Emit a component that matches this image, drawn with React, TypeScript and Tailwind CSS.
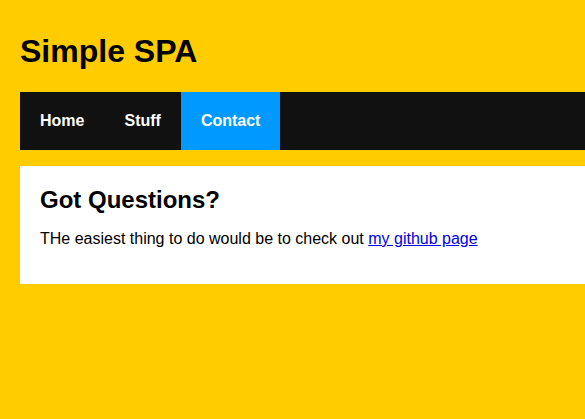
import React from "react";

const App = () => {
  const links = [
    { name: "Home", active: false },
    { name: "Stuff", active: false },
    { name: "Contact", active: true },
  ];

  return (
    <div className="min-h-[419px] bg-[#ffcc00] pl-5 pt-5 pb-5 font-['Liberation_Sans',Arial,sans-serif] text-black">
      <h1 className="mt-[13px] mb-[22px] text-[32px] leading-[37px] font-bold">Simple SPA</h1>

      {/* Nav */}
      <ul className="flex bg-[#111111] mb-4">
        {links.map((link) => (
          <li key={link.name}>
            <a
              href="#"
              className={`inline-block p-5 text-base leading-[18px] font-bold text-white no-underline ${
                link.active ? "bg-[#0099ff]" : ""
              }`}
            >
              {link.name}
            </a>
          </li>
        ))}
      </ul>

      {/* Content */}
      <div className="bg-white p-5">
        <h2 className="m-0 text-2xl leading-[28px] font-bold">Got Questions?</h2>
        <p className="my-4 text-base leading-[18px]">
          THe easiest thing to do would be to check out{" "}
          <a href="#" className="text-[#0000ee] underline">
            my github page
          </a>
        </p>
      </div>
    </div>
  );
};

export default App;
